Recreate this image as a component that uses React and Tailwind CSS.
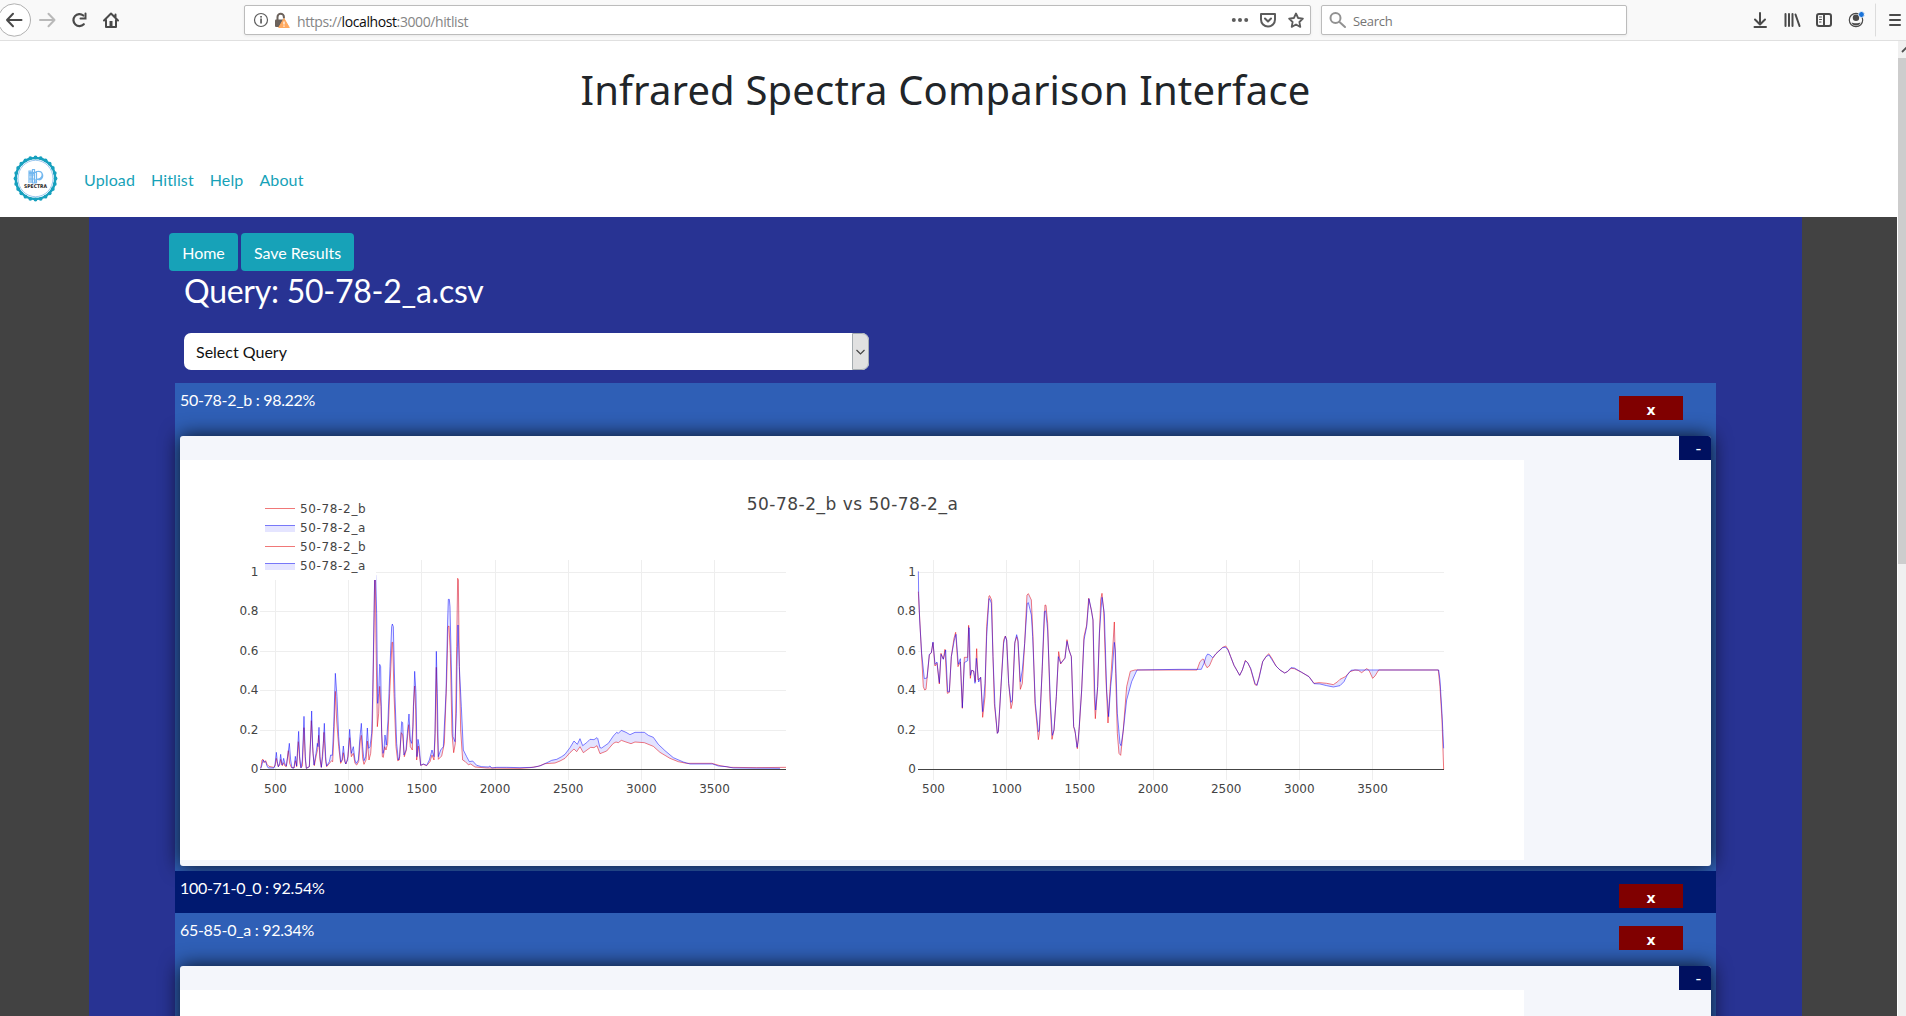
import React from "react";

const LEFT_A =
  "92,866 95,858 98,845 100,840 103,846 107,845 111,858 115,864 132,864 135,855 139,817 142,845 145,860 149,850 152,823 156,855 158,850 161,835 165,852 169,858 173,830 178,790 182,840 186,864 192,864 196,829 200,858 202,820 206,754 209,830 213,864 217,840 222,709 226,830 229,865 238,860 242,780 245,693 248,800 252,855 258,820 262,790 264,800 267,742 270,830 274,862 278,830 283,730 287,830 290,858 298,845 302,825 307,826 311,740 316,580 321,650 326,770 332,846 336,840 340,798 344,835 347,852 353,840 359,748 364,820 370,800 375,840 379,850 385,840 390,770 394,730 398,800 402,842 407,830 412,744 416,805 420,800 425,760 428,650 434,288 437,285 440,400 443,670 446,640 449,553 452,560 455,760 459,820 462,808 465,765 469,795 474,720 480,560 485,440 487,432 490,440 495,650 500,790 505,840 509,830 515,725 518,728 522,825 528,810 532,760 537,702 541,780 545,790 549,740 554,574 558,640 561,830 564,778 568,800 572,856 580,852 590,856 598,840 606,810 612,830 615,760 619,514 622,640 625,830 632,810 640,800 648,640 653,420 655,358 658,358 660,380 665,600 669,770 675,785 679,700 681,560 684,435 688,560 694,680 700,810 710,830 718,845 728,843 740,856 755,860 775,861 780,858 785,864 800,862 830,862 870,863 910,862 932,857 955,846 965,841 980,838 995,830 1005,823 1020,803 1032,783 1042,793 1050,776 1058,797 1070,788 1080,778 1092,779 1101,773 1103,775 1110,803 1115,804 1125,797 1135,790 1150,768 1160,757 1165,760 1174,751 1188,757 1200,764 1215,757 1243,757 1255,766 1270,772 1285,793 1305,812 1330,833 1360,846 1380,852 1448,852 1465,858 1490,860 1510,864 1650,865";
const LEFT_B =
  "92,864 94,855 96,840 99,838 102,848 107,842 111,853 117,859 130,862 135,858 139,835 142,850 145,860 149,855 152,838 157,857 161,848 165,858 169,860 175,812 179,850 184,862 192,864 196,842 200,860 205,785 210,850 213,863 217,858 222,743 226,840 229,865 238,860 244,722 249,820 253,857 259,825 263,808 266,766 270,840 274,862 280,790 282,757 287,845 290,860 300,848 305,842 308,845 312,760 316,634 320,720 326,800 332,850 337,840 340,818 344,845 348,852 354,830 359,773 364,830 370,820 375,850 380,855 386,845 391,780 394,766 398,835 402,853 408,840 412,783 417,840 422,820 427,750 432,450 434,288 436,288 438,480 442,740 446,700 449,619 453,680 457,830 460,832 464,800 468,810 473,790 479,640 486,487 488,487 492,640 498,800 503,842 508,840 514,758 518,765 523,830 529,810 536,734 541,800 547,810 550,680 554,618 557,690 560,840 565,798 568,820 572,856 580,853 590,857 600,845 606,825 612,840 615,780 619,562 622,750 625,838 635,828 643,790 650,600 654,440 657,438 661,520 666,760 671,818 676,790 680,500 683,295 685,300 688,560 692,750 698,840 706,845 715,854 722,852 735,861 770,864 870,865 900,863 925,859 945,851 975,849 990,843 1005,835 1020,818 1032,807 1040,815 1050,800 1060,818 1082,802 1092,803 1101,797 1110,821 1130,813 1150,790 1158,786 1165,788 1174,781 1188,786 1203,791 1215,786 1243,788 1270,799 1290,817 1320,835 1345,845 1370,850 1445,850 1470,857 1500,862 1580,863 1668,862";
const RIGHT_A =
  "85,94 86,160 89,240 95,340 103,416 111,414 118,343 124,338 129,306 135,373 141,366 148,428 153,343 160,358 167,330 173,455 178,455 184,350 193,300 198,283 205,373 211,356 217,503 223,368 233,362 236,262 238,264 241,406 245,391 251,393 255,430 259,355 266,426 272,412 278,515 285,430 290,290 297,176 300,178 304,190 309,350 315,500 322,580 325,575 333,440 341,310 346,289 350,300 356,430 363,487 367,480 375,305 380,284 384,300 391,425 397,390 404,310 412,190 415,188 424,225 428,290 436,490 445,575 448,570 456,400 463,215 467,213 473,270 481,480 487,586 492,570 499,470 505,350 512,370 525,355 531,304 537,330 544,350 551,560 555,570 561,622 565,600 575,450 582,300 590,260 597,176 604,210 609,240 614,450 617,510 623,440 628,280 636,172 643,220 650,450 656,530 662,440 667,390 673,307 676,330 682,520 690,610 693,617 700,570 710,480 725,425 741,390 870,388 934,388 942,370 948,350 953,342 960,345 968,353 978,341 998,323 1007,322 1014,330 1022,350 1032,376 1040,390 1049,406 1057,390 1066,363 1073,368 1082,385 1095,430 1101,436 1107,415 1118,365 1128,350 1137,345 1145,358 1158,378 1170,390 1184,399 1192,395 1203,383 1213,384 1235,397 1257,410 1272,431 1290,432 1310,437 1330,441 1350,437 1362,425 1372,405 1383,391 1390,390 1646,390 1650,420 1656,520 1661,625";
const RIGHT_B =
  "85,155 88,215 94,330 100,440 104,450 108,448 118,345 124,338 129,308 135,378 141,370 148,432 153,340 160,357 165,328 172,460 178,457 184,350 192,295 197,277 204,380 211,366 217,505 223,352 233,352 236,256 241,415 245,391 251,393 256,425 260,326 264,420 272,412 278,532 285,470 290,260 297,168 299,167 305,180 309,350 313,490 322,580 325,575 334,420 341,300 346,288 350,300 356,430 363,506 367,490 374,310 380,290 384,305 391,448 397,430 404,310 411,165 415,161 424,180 429,290 435,490 445,599 448,580 457,380 465,195 468,196 473,250 480,480 486,598 492,570 499,470 506,335 512,372 525,353 531,299 537,330 544,350 551,560 556,580 562,626 568,560 575,450 582,290 590,255 596,175 604,210 609,240 613,470 616,536 623,440 632,180 636,160 641,210 648,420 654,549 660,450 668,330 673,246 677,400 682,580 687,640 692,646 699,580 710,440 721,394 735,390 870,390 921,390 930,365 937,358 941,358 945,372 951,383 958,378 968,355 978,341 998,322 1007,318 1014,328 1022,350 1032,376 1040,390 1049,406 1057,390 1066,361 1073,368 1082,387 1095,434 1100,436 1107,412 1118,365 1128,350 1136,341 1145,354 1158,378 1170,390 1184,399 1192,395 1203,385 1213,386 1235,397 1257,410 1272,430 1287,428 1310,430 1330,434 1343,425 1350,418 1366,410 1380,395 1395,390 1405,391 1415,398 1430,386 1437,391 1448,415 1455,408 1466,390 1645,390 1650,440 1656,540 1661,688";

const reverse = (points) => points.split(" ").reverse().join(" ");

const X_LABELS = ["500", "1000", "1500", "2000", "2500", "3000", "3500"];
const Y_LABELS = ["0", "0.2", "0.4", "0.6", "0.8", "1"];

function Axes({ x0, x1, firstTick, labelEnd }) {
  return (
    <g>
      {X_LABELS.map((label, i) => (
        <g key={label}>
          <rect x={Math.round(firstTick + i * 73.17)} y={100} width={1} height={220} fill="#eee" />
          <text x={firstTick + 0.5 + i * 73.17} y={333} textAnchor="middle">
            {label}
          </text>
        </g>
      ))}
      {Y_LABELS.map((label, i) => (
        <g key={label}>
          <rect x={x0} y={Math.round(309 - i * 39.5)} width={x1 - x0} height={1} fill={i ? "#eee" : "#444"} />
          <text x={labelEnd} y={Math.round(313 - i * 39.5)} textAnchor="end">
            {label}
          </text>
        </g>
      ))}
    </g>
  );
}

function Traces({ a, b, transform }) {
  return (
    <g transform={transform} fill="none" strokeWidth="3" strokeLinejoin="round">
      <polyline points={b} stroke="#f00000" strokeOpacity="0.55" />
      <polygon points={a + " " + reverse(b)} fill="#8080ff" fillOpacity="0.22" />
      <polyline points={a} stroke="#0000ff" strokeOpacity="0.5" />
    </g>
  );
}

function SpectraChart() {
  return (
    <svg
      width="1344"
      height="400"
      viewBox="0 0 1344 400"
      className="block bg-white font-['DejaVu_Sans',sans-serif] text-[12px]"
      fill="#444"
    >
      <Axes x0={80} x1={606} firstTick={95} labelEnd={78.5} />
      <Axes x0={738} x1={1264} firstTick={753} labelEnd={736} />
      <Traces a={LEFT_A} b={LEFT_B} transform="translate(50 20) scale(0.33333)" />
      <Traces a={RIGHT_A} b={RIGHT_B} transform="translate(710 80) scale(0.33333)" />
      <rect x="80" y="36" width="116" height="84" fill="#fff" />
      {["50-78-2_b", "50-78-2_a", "50-78-2_b", "50-78-2_a"].map((name, i) => (
        <g key={i}>
          {i % 2 === 1 && <rect x="85" y={47 + i * 19} width="30" height="6" fill="#e5e5ff" />}
          <rect x="85" y={(i % 2 ? 46 : 48) + i * 19} width="30" height="1" fill={i % 2 ? "#7878f8" : "#f07878"} />
          <text x="120" y={53 + i * 19} className="tracking-[0.65px]">
            {name}
          </text>
        </g>
      ))}
      <text x="672.500" y="50" textAnchor="middle" className="text-[17px] tracking-[0.5px]">
        50-78-2_b vs 50-78-2_a
      </text>
    </svg>
  );
}

function Panel({ children, height }) {
  return (
    <div
      className="mx-[5px] flex items-start justify-between overflow-hidden rounded-[3px] bg-[#f4f6fb] shadow-[0_0_20px_rgba(0,0,0,0.85)]"
      style={{ height }}
    >
      <div className="mt-6 h-[400px] w-[1344px] bg-white">{children}</div>
      <button className="h-6 w-8 bg-[#001060] pt-[2px] pl-[7px] font-['DejaVu_Sans',sans-serif] text-[16px] leading-none text-white">
        -
      </button>
    </div>
  );
}

function ResultHeader({ title, tall }) {
  return (
    <div className={tall ? "flex h-[53px] justify-between pl-[5px]" : "flex h-[42px] justify-between pl-[5px]"}>
      <span className="pt-[5px] text-[16px] leading-6 tracking-[-0.3px]">{title}</span>
      <button className="mt-[13px] mr-[33px] h-6 w-16 bg-[#800000] pt-[3px] text-center font-['DejaVu_Sans',sans-serif] text-[14px] leading-none font-bold">
        x
      </button>
    </div>
  );
}

function Toolbar() {
  return (
    <div className="flex h-[41px] items-start border-b border-[#e0e0e0] bg-[#f9f9f9]">
      <div className="flex h-10 w-[244px] shrink-0 items-center">
        <svg width="130" height="40" viewBox="0 0 130 40" fill="none" stroke="#4a4a4a" strokeWidth="2" strokeLinecap="round" strokeLinejoin="round">
          <circle cx="14.3" cy="20" r="16.2" fill="#fff" stroke="#b1b1b1" strokeWidth="1" />
          <path d="M21.5 20H7M13 13.8L7 20l6 6.2" />
          <path d="M40 20h14.5M48.5 13.8L54.500 20l-6 6.2" stroke="#b9b9b9" />
          <path d="M83.800 24.200A6 6 0 1 1 83.300 15.500" strokeWidth="2.200" />
          <path d="M85.500 13.500v5h-5" strokeLinejoin="miter" />
          <path d="M104 20.500l7-7 7 7M106 20v7h10v-7M115.500 14.500v3" />
          <rect x="109.500" y="21" width="3" height="6" fill="#4a4a4a" stroke="none" />
        </svg>
      </div>
      <div className="mt-[5px] flex h-[30px] w-[1067px] shrink-0 items-center rounded-[2px] border border-[#bcbcbc] bg-white font-['Open_Sans',sans-serif] text-[14px] shadow-[0_1px_3px_rgba(0,0,0,0.07)]">
        <svg width="52" height="28" viewBox="245 6 52 28" fill="none">
          <circle cx="261" cy="20" r="6.500" stroke="#5c5c5c" strokeWidth="1.200" />
          <rect x="260.200" y="18.500" width="1.700" height="5" fill="#5c5c5c" />
          <rect x="260.200" y="16" width="1.700" height="1.600" fill="#5c5c5c" />
          <path d="M277.500 20v-3a3.200 3.200 0 0 1 6.400 0v1.500" stroke="#6b625c" strokeWidth="2" />
          <rect x="275" y="19.500" width="10" height="7.500" rx="1" fill="#6b625c" />
          <path d="M284 18.500l5.300 9h-10.600z" fill="#ffa95e" stroke="#ffa95e" strokeLinejoin="round" />
          <path d="M284 21.500v3M284 25.600v1.100" stroke="#fff" strokeWidth="1.200" />
        </svg>
        <span className="grow pt-[3px] tracking-[-0.4px] text-[#858585]">
          https://<span className="text-[#0c0c0d]">localhost</span>:3000/hitlist
        </span>
        <svg width="82" height="28" viewBox="1228 6 82 28" fill="none" stroke="#5c5c5c" strokeWidth="2" strokeLinejoin="round">
          <g fill="#5c5c5c" stroke="none">
            <circle cx="1233.800" cy="20" r="2" />
            <circle cx="1240" cy="20" r="2" />
            <circle cx="1246.200" cy="20" r="2" />
          </g>
          <path d="M1261 14h14v5.500a7 7 0 0 1-14 0z" />
          <path d="M1265 18.500l3 3 3-3" strokeLinecap="round" />
          <path d="M1296 13.500l2.100 4.500 4.800.600-3.500 3.400.900 4.900-4.300-2.400-4.300 2.400.900-4.900-3.500-3.400 4.800-.600z" strokeWidth="1.800" />
        </svg>
      </div>
      <div className="mt-[5px] ml-[10px] flex h-[30px] w-[306px] shrink-0 items-center rounded-[2px] border border-[#bcbcbc] bg-white font-['Open_Sans',sans-serif] text-[13px] text-[#757575] shadow-[0_1px_3px_rgba(0,0,0,0.07)]">
        <svg width="31" height="28" viewBox="1322 6 31 28" fill="none" stroke="#929292" strokeWidth="2" strokeLinecap="round">
          <circle cx="1335.500" cy="18" r="5" />
          <path d="M1339.500 22l5.500 5" />
        </svg>
        <span className="pt-[3px] tracking-[-0.3px]">Search</span>
      </div>
      <svg className="ml-auto block" width="166" height="40" viewBox="1740 0 166 40" fill="none" stroke="#4a4a4a" strokeWidth="2" strokeLinecap="round" strokeLinejoin="round">
        <path d="M1760 13v11M1755 19.500l5 5 5-5M1754.500 27h11.500" />
        <path d="M1785.500 14v12M1789 14v12M1792.500 14v12M1795.500 14.500l4 11.500" strokeWidth="2" />
        <rect x="1817" y="14" width="14" height="12" rx="2" />
        <path d="M1824 14v12" />
        <path d="M1819.500 17h2M1819.500 19.500h2M1819.500 22h1.500" strokeWidth="1" />
        <circle cx="1856" cy="20" r="6.700" strokeWidth="1.200" />
        <circle cx="1856" cy="17.800" r="3.200" fill="#4a4a4a" stroke="none" />
        <path d="M1851.500 22.500c1.500 1 7.500 1 9 0-1 4-8 4-9 0z" fill="#4a4a4a" stroke="none" />
        <circle cx="1861.500" cy="14.500" r="3" fill="#1a73d9" stroke="#f9f9f9" strokeWidth="0.800" />
        <path d="M1875.500 4v32" stroke="#dcdcdc" strokeWidth="1" />
        <path d="M1890 15h10M1890 20h10M1890 25h10" />
      </svg>
    </div>
  );
}

const NODES = Array.from({ length: 24 }, (_, i) => {
  const t = (i / 24) * Math.PI * 2;
  return [23.5 + Math.cos(t) * 20, 23.5 + Math.sin(t) * 21];
});

function Logo() {
  return (
    <svg width="47" height="48" viewBox="0 0 47 48" fill="none">
      {NODES.map(([x, y], i) => (
        <circle key={i} cx={x} cy={y} r="1.900" fill="#17a0be" />
      ))}
      <ellipse cx="23.500" cy="23.500" rx="19.700" ry="20.500" stroke="#17a0be" strokeWidth="2.500" />
      <ellipse cx="23.500" cy="23.500" rx="17.500" ry="18.200" stroke="#9dc9ef" strokeWidth="1" fill="#fff" />
      <g stroke="#74b8ef" strokeWidth="1.200">
        <path d="M17 28V16h2v12M20.500 28V14.500h2V28M17 24h6M17 20h6M24.500 28V16.500h2a4 4 0 0 1 0 8.500M23 17.500c5-3 8 0 7 3.500s-4 3.500-6 3.500v3.500h-4" />
        <path d="M17 18h5" strokeWidth="2" />
      </g>
      <text x="23.500" y="33" textAnchor="middle" textLength="23" lengthAdjust="spacingAndGlyphs" fill="#222" className="font-['DejaVu_Sans',sans-serif] text-[5px] font-bold">
        SPECTRA
      </text>
    </svg>
  );
}

export default function App() {
  return (
    <div className="h-[1016px] w-[1906px] overflow-hidden bg-white font-['Lato',sans-serif]">
      <Toolbar />
      <div className="flex h-[975px]">
        <div className="h-full w-[1897px] bg-[#424242]">
          <header className="h-[176px] bg-white">
            <h1 className="pt-[19px] pr-[6px] text-center font-['Noto_Sans',sans-serif] text-[40px] leading-[60px] tracking-[0.17px] text-[#212529]">
              Infrared Spectra Comparison Interface
            </h1>
            <nav className="mt-[35px] flex items-center pl-3 text-[16px] text-[#17a2b8]">
              <Logo />
              <div className="ml-[25px] flex gap-4 pt-[2px] tracking-[0.12px]">
                <a>Upload</a>
                <a>Hitlist</a>
                <a>Help</a>
                <a>About</a>
              </div>
            </nav>
          </header>
          <main className="ml-[89px] h-[799px] w-[1713px] overflow-hidden bg-[#283393] pt-4 text-white">
            <div className="ml-20 flex gap-[3px] text-[16px]">
              <button className="h-[38px] w-[69px] rounded bg-[#17a2b8] pt-px">Home</button>
              <button className="h-[38px] w-[113px] rounded bg-[#17a2b8] pt-px">Save Results</button>
            </div>
            <h2 className="ml-[95px] pt-px text-[32px] leading-[38px] tracking-[-0.25px]">Query: 50-78-2_a.csv</h2>
            <div className="mt-[23px] ml-[95px] flex h-[37px] w-[685px] overflow-hidden rounded-[7px] bg-white text-[16px] text-[#111]">
              <span className="grow pt-[7px] pl-3 leading-6">Select Query</span>
              <span className="flex w-[17px] items-center justify-center rounded-r-[7px] border border-[#a5acb0] bg-[#e1e1e1]">
                <svg width="9" height="6" viewBox="0 0 9 6" fill="none" stroke="#444" strokeWidth="1.200">
                  <path d="M0.500 1l4 4 4-4" />
                </svg>
              </span>
            </div>
            <ul className="mt-[13px] ml-[86px] w-[1541px]">
              <li className="h-[488px] bg-[#2f5fb6]">
                <ResultHeader title="50-78-2_b : 98.22%" tall />
                <Panel height={430}>
                  <SpectraChart />
                </Panel>
              </li>
              <li className="relative h-[42px] bg-[#001970]">
                <ResultHeader title="100-71-0_0 : 92.54%" />
              </li>
              <li className="h-[488px] bg-[#2f5fb6]">
                <ResultHeader title="65-85-0_a : 92.34%" tall />
                <Panel height={430} />
              </li>
            </ul>
          </main>
        </div>
        <div className="ml-px flex w-2 flex-col bg-[#f0f0f0]">
          <svg width="8" height="17" viewBox="0 0 8 17" fill="none" stroke="#505050" strokeWidth="1.800">
            <path d="M4 11l4.500-4.500L13 11" />
          </svg>
          <div className="h-[506px] bg-[#cdcdcd]" />
        </div>
      </div>
    </div>
  );
}
